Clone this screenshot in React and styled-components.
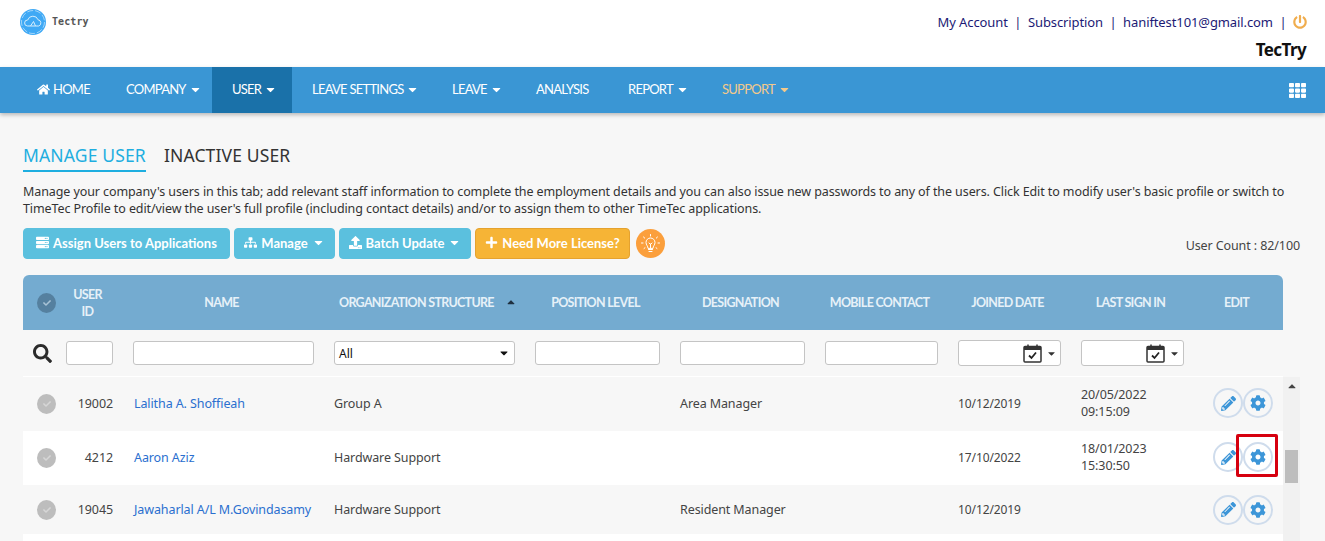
import React from "react";
import styled, { createGlobalStyle } from "styled-components";
import {
  FaHome,
  FaCaretDown,
  FaCaretUp,
  FaTh,
  FaPowerOff,
  FaSitemap,
  FaUpload,
  FaPlus,
  FaSearch,
  FaPencilAlt,
  FaCog,
  FaCheck,
  FaServer,
} from "react-icons/fa";

const GlobalStyle = createGlobalStyle`
  html, body {
    margin: 0;
    height: 100%;
    overflow: hidden;
    background: #f7f7f7;
  }
  body {
    font-family: "Noto Sans", "Liberation Sans", sans-serif;
    font-size: 13px;
    color: #333;
  }
`;

const COLS = "33px 67px 201px 201px 145px 145px 133px 123px 123px 89px";

const Page = styled.div`
  height: 100vh;
  overflow: hidden;
  display: flex;
  flex-direction: column;
`;

const Header = styled.header`
  height: 67px;
  flex: none;
  background: #fff;
  display: flex;
  justify-content: space-between;
  padding: 0 18px 0 20px;
`;

const Logo = styled.div`
  display: flex;
  align-items: center;
  gap: 6px;
  height: 26px;
  margin-top: 9px;
  font-family: "DejaVu Sans Mono", monospace;
  font-size: 10px;
  font-weight: 700;
  letter-spacing: 0.1px;
  color: #555;
  span {
    padding-bottom: 2px;
  }
`;

const UserBox = styled.div`
  display: flex;
  flex-direction: column;
  align-items: flex-end;
  padding-top: 11px;
`;

const TopLinks = styled.div`
  display: flex;
  align-items: center;
  gap: 6.5px;
  height: 22px;
  font-size: 13px;
  letter-spacing: -0.1px;
  color: #1c1a75;
  svg {
    color: #f0ad4e;
    font-size: 14px;
  }
`;

const Company = styled.div`
  margin: 5px 1px 0 0;
  font-size: 17px;
  font-weight: 700;
  letter-spacing: -0.6px;
  color: #111;
`;

const Nav = styled.nav`
  height: 46px;
  flex: none;
  background: #3a96d4;
  box-shadow: 0 2px 4px rgba(0, 0, 0, 0.25);
  display: flex;
  align-items: stretch;
  padding: 0 19px 0 22px;
  position: relative;
`;

const NavItem = styled.div`
  width: ${(p) => p.$w}px;
  box-sizing: border-box;
  display: flex;
  align-items: center;
  gap: 3px;
  padding-left: ${(p) => p.$lead || 20}px;
  padding-bottom: 2px;
  font-family: Lato, "Liberation Sans", sans-serif;
  font-size: 13px;
  letter-spacing: -0.75px;
  white-space: nowrap;
  color: ${(p) => (p.$highlight ? "#f3c98b" : "#fff")};
  background: ${(p) => (p.$active ? "#1a71a9" : "transparent")};
  svg {
    font-size: 13px;
  }
`;

const NavGrid = styled.div`
  margin-left: auto;
  display: flex;
  align-items: center;
  color: #fff;
  font-size: 17px;
`;

const Content = styled.main`
  flex: 1;
  min-height: 0;
  padding: 30px 25px 0 23px;
  display: flex;
  flex-direction: column;
`;

const Tabs = styled.div`
  display: flex;
  gap: 18px;
  font-size: 17.5px;
  line-height: 25px;
  letter-spacing: 0.15px;
`;

const Tab = styled.div`
  color: ${(p) => (p.$active ? "#1eaee0" : "#333")};
  padding-bottom: 2px;
  border-bottom: 2px solid ${(p) => (p.$active ? "#1eaee0" : "transparent")};
`;

const Intro = styled.p`
  margin: 11px 0 0 0;
  font-size: 12.5px;
  line-height: 17px;
  letter-spacing: -0.095px;
  color: #333;
`;

const Toolbar = styled.div`
  display: flex;
  align-items: center;
  gap: 4px;
  margin-top: 11px;
  height: 31px;
`;

const Button = styled.div`
  width: ${(p) => p.$w}px;
  height: 31px;
  box-sizing: border-box;
  flex: none;
  display: flex;
  align-items: center;
  justify-content: center;
  gap: 4px;
  padding-bottom: 2px;
  border-radius: 4px;
  border: 1px solid ${(p) => (p.$warn ? "#e5a22f" : "#5bc0de")};
  background: ${(p) => (p.$warn ? "#f6b436" : "#5bc0de")};
  color: #fff;
  font-family: Lato, "Liberation Sans", sans-serif;
  font-size: 13px;
  font-weight: 700;
  white-space: nowrap;
  svg {
    flex: none;
    font-size: 13px;
  }
`;

const Bulb = styled.div`
  width: 29px;
  height: 29px;
  margin-left: 2px;
  border-radius: 50%;
  background: #fb9f3c;
  display: flex;
  align-items: center;
  justify-content: center;
`;

const UserCount = styled.div`
  margin-left: auto;
  margin-top: 3px;
  font-size: 12.5px;
  letter-spacing: -0.1px;
  color: #444;
`;

const TableHead = styled.div`
  margin-top: 16px;
  width: 1260px;
  height: 55px;
  flex: none;
  display: grid;
  grid-template-columns: ${COLS};
  align-items: center;
  background: #74abd0;
  border-radius: 6px 6px 0 0;
  font-family: Lato, "Liberation Sans", sans-serif;
  font-size: 12.5px;
  font-weight: 700;
  letter-spacing: -0.7px;
  color: #e6f1f8;
`;

const HeadCell = styled.div`
  text-align: ${(p) => (p.$lead ? "left" : "center")};
  line-height: 17px;
  padding-left: ${(p) => p.$lead || 0}px;
  padding-right: ${(p) => (p.$lead ? 0 : 4)}px;
  white-space: nowrap;
`;

const SortMark = styled.span`
  display: inline-flex;
  margin-left: 11px;
  color: #1f3040;
  font-size: 12px;
  vertical-align: -1px;
`;

const Tick = styled.div`
  width: 19px;
  height: 20px;
  margin-left: 14px;
  border-radius: 50%;
  background: ${(p) => (p.$head ? "#55809f" : "#bdbdbd")};
  color: ${(p) => (p.$head ? "#a9c3d6" : "#d6d6d6")};
  display: flex;
  align-items: center;
  justify-content: center;
  font-size: 8px;
`;

const FilterRow = styled.div`
  width: 1260px;
  height: 47px;
  flex: none;
  display: grid;
  grid-template-columns: ${COLS};
  align-items: center;
  border-bottom: 1px solid #fff;
  box-sizing: border-box;
`;

const FilterCell = styled.div`
  padding: 0 10px;
  display: flex;
  align-items: center;
`;

const SearchCell = styled.div`
  display: flex;
  justify-content: center;
  padding-left: 5px;
  font-size: 19px;
  color: #2b2b2b;
`;

const TextBox = styled.div`
  width: 100%;
  height: 24px;
  box-sizing: border-box;
  border: 1px solid #c4c4c4;
  border-radius: 3px;
  background: #fff;
  display: flex;
  align-items: center;
  justify-content: space-between;
  padding: 0 4px;
  font-size: 12px;
  color: #111;
`;

const DateBox = styled(TextBox)`
  height: 26px;
  justify-content: flex-end;
  gap: 4px;
  padding-right: 3px;
  color: #333;
  svg + svg {
    font-size: 11px;
  }
`;

const ListWrap = styled.div`
  flex: 1;
  min-height: 0;
  width: 1277px;
  display: flex;
  overflow: hidden;
`;

const List = styled.div`
  width: 1260px;
  flex: none;
`;

const Row = styled.div`
  display: grid;
  grid-template-columns: ${COLS};
  align-items: center;
  box-sizing: border-box;
  height: ${(p) => p.$h}px;
  padding-bottom: ${(p) => p.$trim || 0}px;
  background: ${(p) => (p.$white ? "#fff" : "#f7f7f7")};
  color: #444;
  font-size: 12.5px;
  letter-spacing: -0.1px;
  ${Tick} {
    margin-top: ${(p) => p.$trim || 0}px;
  }
`;

const Cell = styled.div`
  padding: 0 10px;
  line-height: 17px;
  white-space: nowrap;
`;

const IdCell = styled(Cell)`
  text-align: right;
`;

const NameCell = styled(Cell)`
  padding-left: 11px;
  color: #2a6fcf;
`;

const JoinedCell = styled(Cell)`
  font-size: 12px;
`;

const EditCell = styled.div`
  display: flex;
  justify-content: flex-end;
  padding-right: 10px;
`;

const RoundBtn = styled.div`
  width: 30px;
  height: 30px;
  box-sizing: border-box;
  border: 2px solid #cfdcec;
  border-radius: 50%;
  display: flex;
  align-items: center;
  justify-content: center;
  color: #3d96d8;
  font-size: ${(p) => p.$icon}px;
  position: relative;
`;

const Highlight = styled.div`
  position: absolute;
  left: -9px;
  top: -10px;
  width: 42px;
  height: 43px;
  box-sizing: border-box;
  border: 3px solid #d6000f;
  border-radius: 2px;
`;

const ScrollTrack = styled.div`
  width: 17px;
  flex: none;
  background: #f1f1f1;
  position: relative;
`;

const ScrollUp = styled.div`
  display: flex;
  justify-content: center;
  color: #444;
  font-size: 12px;
  padding-top: 3px;
`;

const ScrollThumb = styled.div`
  position: absolute;
  left: 2px;
  top: 73px;
  width: 13px;
  height: 33px;
  background: #bdbdbd;
`;

function CloudLogo() {
  return (
    <svg width="26" height="26" viewBox="0 0 26 26">
      <circle cx="13" cy="13" r="13" fill="#3fa9f5" />
      <circle cx="13" cy="13" r="11.500" fill="none" stroke="#fff" strokeWidth="0.5" strokeDasharray="6 2" />
      <path
        d="M7.500 17a3 3 0 0 1 .2-6 5.500 5.500 0 0 1 10.400-.2 3.200 3.200 0 0 1 .6 6.200H7.500zM10.500 17l3-4.500 2 4.500"
        fill="none"
        stroke="#d6eefd"
        strokeWidth="1"
      />
    </svg>
  );
}

function BulbIcon() {
  return (
    <svg width="21" height="21" viewBox="0 0 21 21" fill="none" stroke="#fff" strokeWidth="1" strokeLinecap="round">
      <path d="M8 15c0-2-2-3-2-5.500a4.500 4.500 0 0 1 9 0c0 2.500-2 3.500-2 5.500z" />
      <path d="M8.500 16.500h4M9 18.500h3M10.500 15v-4M9 10l1.500 1.500L12 10" />
      <path d="M10.500 1.500v1.500M3.500 4l1.200 1.100M17.500 4l-1.200 1.100M1.500 10H3M18 10h1.500M4 15.500l1-.8M17 15.500l-1-.8" />
    </svg>
  );
}

function CalendarIcon() {
  return (
    <svg width="19" height="19" viewBox="0 0 19 19">
      <rect x="1" y="2.500" width="17" height="15.500" rx="1" fill="#fff" stroke="#333" strokeWidth="1.500" />
      <rect x="1" y="2.500" width="17" height="3.500" fill="#333" />
      <path d="M5 0.500v3M14 0.500v3" stroke="#333" strokeWidth="1.500" />
      <path d="M6 11.500l2.500 2.500 4.500-5.500" fill="none" stroke="#222" strokeWidth="1.800" />
    </svg>
  );
}

const navItems = [
  { w: 84, lead: 15, label: "HOME", home: true },
  { w: 106, label: "COMPANY", caret: true },
  { w: 80, label: "USER", caret: true, active: true },
  { w: 140, label: "LEAVE SETTINGS", caret: true },
  { w: 84, label: "LEAVE", caret: true },
  { w: 92, label: "ANALYSIS" },
  { w: 94, label: "REPORT", caret: true },
  { w: 103, label: "SUPPORT", caret: true, highlight: true },
];

const rows = [
  { h: 54, trim: 2, id: "19002", name: "Lalitha A. Shoffieah", org: "Group A", des: "Area Manager", joined: "10/12/2019", last: ["20/05/2022", "09:15:09"] },
  { h: 54, trim: 2, white: true, id: "4212", name: "Aaron Aziz", org: "Hardware Support", des: "", joined: "17/10/2022", last: ["18/01/2023", "15:30:50"], mark: true },
  { h: 49, id: "19045", name: "Jawaharlal A/L M.Govindasamy", org: "Hardware Support", des: "Resident Manager", joined: "10/12/2019", last: [] },
  { h: 50, white: true, empty: true },
];

export default function App() {
  return (
    <Page>
      <GlobalStyle />
      <Header>
        <Logo>
          <CloudLogo />
          <span>Tectry</span>
        </Logo>
        <UserBox>
          <TopLinks>
            <span>My Account</span>
            <span>|</span>
            <span>Subscription</span>
            <span>|</span>
            <span>haniftest101@gmail.com</span>
            <span>|</span>
            <FaPowerOff />
          </TopLinks>
          <Company>TecTry</Company>
        </UserBox>
      </Header>

      <Nav>
        {navItems.map((n) => (
          <NavItem key={n.label} $w={n.w} $lead={n.lead} $active={n.active} $highlight={n.highlight}>
            {n.home && <FaHome />}
            {n.label}
            {n.caret && <FaCaretDown />}
          </NavItem>
        ))}
        <NavGrid><FaTh /></NavGrid>
      </Nav>

      <Content>
        <Tabs>
          <Tab $active>MANAGE USER</Tab>
          <Tab>INACTIVE USER</Tab>
        </Tabs>
        <Intro>
          Manage your company's users in this tab; add relevant staff information to complete the employment details and you can also issue new passwords to any of the users. Click Edit to modify user's basic profile or switch to TimeTec Profile to edit/view the user's full profile (including contact details) and/or to assign them to other TimeTec applications.
        </Intro>
        <Toolbar>
          <Button $w={207}><FaServer /> Assign Users to Applications</Button>
          <Button $w={101}><FaSitemap /> Manage <FaCaretDown /></Button>
          <Button $w={132}><FaUpload /> Batch Update <FaCaretDown /></Button>
          <Button $warn $w={155}><FaPlus /> Need More License?</Button>
          <Bulb><BulbIcon /></Bulb>
          <UserCount>User Count : 82/100</UserCount>
        </Toolbar>

        <TableHead>
          <Tick $head><FaCheck /></Tick>
          <HeadCell>USER<br />ID</HeadCell>
          <HeadCell>NAME</HeadCell>
          <HeadCell $lead={15}>ORGANIZATION STRUCTURE<SortMark><FaCaretUp /></SortMark></HeadCell>
          <HeadCell>POSITION LEVEL</HeadCell>
          <HeadCell>DESIGNATION</HeadCell>
          <HeadCell>MOBILE CONTACT</HeadCell>
          <HeadCell>JOINED DATE</HeadCell>
          <HeadCell>LAST SIGN IN</HeadCell>
          <HeadCell>EDIT</HeadCell>
        </TableHead>

        <FilterRow>
          <SearchCell><FaSearch /></SearchCell>
          <FilterCell><TextBox /></FilterCell>
          <FilterCell><TextBox /></FilterCell>
          <FilterCell><TextBox>All <FaCaretDown /></TextBox></FilterCell>
          <FilterCell><TextBox /></FilterCell>
          <FilterCell><TextBox /></FilterCell>
          <FilterCell><TextBox /></FilterCell>
          <FilterCell><DateBox><CalendarIcon /><FaCaretDown /></DateBox></FilterCell>
          <FilterCell><DateBox><CalendarIcon /><FaCaretDown /></DateBox></FilterCell>
          <div />
        </FilterRow>

        <ListWrap>
          <List>
            {rows.map((r, i) => (
              <Row key={i} $h={r.h} $trim={r.trim} $white={r.white}>
                {r.empty ? null : (
                  <>
                    <Tick><FaCheck /></Tick>
                    <IdCell>{r.id}</IdCell>
                    <NameCell>{r.name}</NameCell>
                    <Cell>{r.org}</Cell>
                    <Cell />
                    <Cell>{r.des}</Cell>
                    <Cell />
                    <JoinedCell>{r.joined}</JoinedCell>
                    <Cell>
                      {r.last[0]}
                      <br />
                      {r.last[1]}
                    </Cell>
                    <EditCell>
                      <RoundBtn $icon={15}><FaPencilAlt /></RoundBtn>
                      <RoundBtn $icon={16}>
                        <FaCog />
                        {r.mark && <Highlight />}
                      </RoundBtn>
                    </EditCell>
                  </>
                )}
              </Row>
            ))}
          </List>
          <ScrollTrack>
            <ScrollUp><FaCaretUp /></ScrollUp>
            <ScrollThumb />
          </ScrollTrack>
        </ListWrap>
      </Content>
    </Page>
  );
}
